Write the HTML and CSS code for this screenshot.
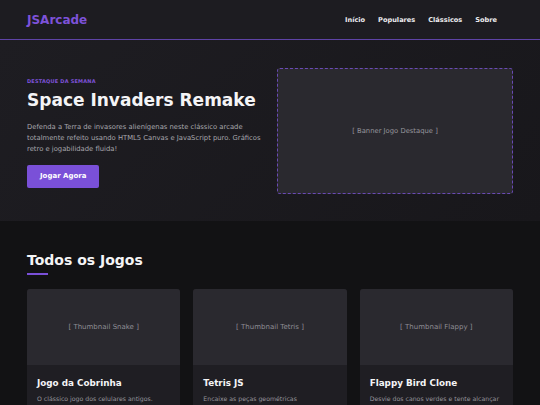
FILE: index.html
```html
<!DOCTYPE html>
<html lang="pt-BR">

<head>
  <meta charset="UTF-8">
  <meta name="viewport" content="width=device-width, initial-scale=1.0">
  <title>JSArcade</title>
  <link rel="stylesheet" href="styles.css">
</head>

<body>
  <header class="topbar">
    <div class="wrap topbar-inner">
      <a class="logo" href="#">JSArcade</a>
      <nav class="nav">
        <a href="#">Início</a>
        <a href="#">Populares</a>
        <a href="#">Clássicos</a>
        <a href="#">Sobre</a>
      </nav>
    </div>
  </header>

  <section class="hero">
    <div class="wrap hero-grid">
      <div class="hero-text">
        <span class="tag">Destaque da Semana</span>
        <h1>Space Invaders Remake</h1>
        <p>Defenda a Terra de invasores alienígenas neste clássico arcade totalmente refeito usando HTML5 Canvas e JavaScript puro. Gráficos retro e jogabilidade fluida!</p>
        <a class="btn" href="#">Jogar Agora</a>
      </div>
      <div class="banner">[ Banner Jogo Destaque ]</div>
    </div>
  </section>

  <main class="wrap games">
    <h2 class="section-title">Todos os Jogos</h2>
    <div class="grid">
      <div class="card">
        <div class="thumb">[ Thumbnail Snake ]</div>
        <div class="card-body">
          <h3>Jogo da Cobrinha</h3>
          <p>O clássico jogo dos celulares antigos.</p>
        </div>
      </div>
      <div class="card">
        <div class="thumb">[ Thumbnail Tetris ]</div>
        <div class="card-body">
          <h3>Tetris JS</h3>
          <p>Encaixe as peças geométricas</p>
        </div>
      </div>
      <div class="card">
        <div class="thumb">[ Thumbnail Flappy ]</div>
        <div class="card-body">
          <h3>Flappy Bird Clone</h3>
          <p>Desvie dos canos verdes e tente alcançar</p>
        </div>
      </div>
    </div>
  </main>
</body>

</html>
```

FILE: styles.css
```css
* {
  box-sizing: border-box;
}

body {
  margin: 0;
  background-color: #121214;
  color: #e8e8ea;
  font-family: "DejaVu Sans", Verdana, sans-serif;
  overflow: hidden;
}

a {
  text-decoration: none;
  color: inherit;
}

.wrap {
  width: 90%;
  margin: 0 auto;
}

/* header */
.topbar {
  background-color: #1d1c21;
  border-bottom: 1px solid #5e43a6;
  height: 40px;
}

.topbar-inner {
  display: flex;
  align-items: center;
  justify-content: space-between;
  height: 39px;
}

.logo {
  color: #7d52d9;
  font-size: 12px;
  font-weight: bold;
}

.nav {
  display: flex;
  gap: 13px;
  margin-right: 16px;
}

.nav a {
  font-size: 6.6px;
  font-weight: bold;
  color: #ececef;
}

/* hero */
.hero {
  background: linear-gradient(135deg, #1e1d22 0%, #18171b 100%);
  height: 181px;
}

.hero-grid {
  display: grid;
  grid-template-columns: 1fr 1fr;
  gap: 14px;
  align-items: center;
  height: 100%;
}

.hero-text {
  padding-top: 5px;
}

.tag {
  display: block;
  color: #7d52d9;
  font-size: 5px;
  font-weight: bold;
  text-transform: uppercase;
  letter-spacing: 0.2px;
}

.hero-text h1 {
  margin: 6px 0 12px;
  font-size: 17px;
  color: #f4f4f6;
}

.hero-text p {
  margin: 0 0 9px;
  font-size: 6.8px;
  line-height: 10.7px;
  color: #a7a6ad;
}

.btn {
  display: inline-block;
  background-color: #7a50d8;
  color: #fff;
  font-size: 7px;
  font-weight: bold;
  padding: 7.5px 13px;
  border-radius: 2px;
}

.banner {
  height: 126px;
  background-color: #2a292f;
  border: 1px dashed #6a4ab5;
  border-radius: 3px;
  display: flex;
  align-items: center;
  justify-content: center;
  font-size: 6.8px;
  color: #97969d;
}

/* games */
.games {
  padding-top: 31px;
}

.section-title {
  margin: 0;
  font-size: 14px;
  color: #f4f4f6;
}

.section-title::after {
  content: "";
  display: block;
  width: 21px;
  height: 2px;
  margin-top: 5px;
  background-color: #7a50d8;
}

.grid {
  display: grid;
  grid-template-columns: repeat(3, 1fr);
  gap: 13px;
  margin-top: 14px;
}

.card {
  background-color: #1f1e23;
  border-radius: 3px;
  overflow: hidden;
}

.thumb {
  height: 76px;
  background-color: #2a292f;
  display: flex;
  align-items: center;
  justify-content: center;
  font-size: 7px;
  color: #8e8d94;
}

.card-body {
  padding: 13px 10px;
}

.card-body h3 {
  margin: 0 0 7px;
  font-size: 8.8px;
  color: #f4f4f6;
}

.card-body p {
  margin: 0;
  font-size: 6.2px;
  color: #96959c;
}
```
